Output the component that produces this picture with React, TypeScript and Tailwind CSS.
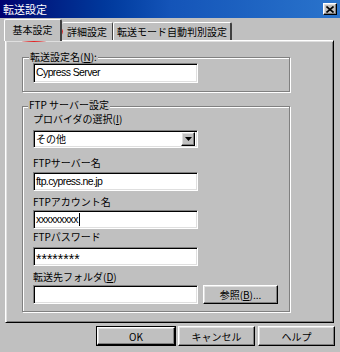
import React from "react";

const sunken =
  "border border-t-[#808080] border-l-[#808080] border-r-white border-b-white shadow-[inset_1px_1px_0_#000,inset_-1px_-1px_0_#dfdfdf] bg-white";
const raised =
  "border border-t-white border-l-white border-r-black border-b-black shadow-[inset_-1px_-1px_0_#808080,inset_1px_1px_0_#dfdfdf] bg-[#c0c0c0]";
const etched = "border border-[#808080] shadow-[1px_1px_0_#fff,inset_1px_1px_0_#fff]";
const latin = "font-['Liberation_Sans',Arial,sans-serif] text-[10.5px] tracking-[-0.6px]";

const Label = ({ children, className = "" }: { children: React.ReactNode; className?: string }) => (
  <div className={`leading-[12px] h-[12px] whitespace-nowrap ${className}`}>{children}</div>
);

const TextBox = ({
  value,
  caret,
  password,
  className = "",
}: {
  value?: string;
  caret?: boolean;
  password?: boolean;
  className?: string;
}) => (
  <div className={`${sunken} w-[165px] h-[19px] flex items-center pl-[2px] ${className}`}>
    <span
      className={
        password
          ? "font-['Liberation_Sans',Arial,sans-serif] text-[14px] leading-none pt-[4px]"
          : latin
      }
    >
      {value}
    </span>
    {caret && <span className="ml-[1px] w-px h-[13px] bg-black" />}
  </div>
);

export default function App() {
  return (
    <div className="relative w-[340px] h-[352px] overflow-hidden bg-[#c0c0c0] text-black text-[10px] font-['Noto_Sans_CJK_JP',sans-serif]">
      {/* title bar */}
      <div className="h-[18px] flex items-center justify-between pl-[3px] pr-[3px] bg-linear-to-r from-[#000070] via-[#1454b8] to-[#2a74cc]">
        <span className="text-white text-[11px] leading-none">転送設定</span>
        <div className={`${raised} w-[14px] h-[12px] flex items-center justify-center`}>
          <svg width="8" height="7" viewBox="0 0 8 7">
            <path d="M0.5 0.5 L7.5 6.5 M7.5 0.5 L0.5 6.5" stroke="#000" strokeWidth="1.6" />
          </svg>
        </div>
      </div>

      {/* tabs */}
      <div className="relative z-10 -mb-px flex items-end h-[23px] pl-[4px]">
        <div className="h-[22px] w-[58px] bg-[#c0c0c0] border-l border-t border-white border-r-2 border-r-[#404040] rounded-t-[2px] flex items-center justify-center pb-[2px]">
          基本設定
        </div>
        <div className="mb-px h-[18px] w-[51px] border-t border-white border-r border-r-[#404040] rounded-t-[2px] flex items-center justify-center">
          詳細設定
        </div>
        <div className="mb-px h-[18px] w-[119px] border-l border-t border-white border-r-2 border-r-[#404040] rounded-t-[2px] flex items-center justify-center">
          転送モード自動判別設定
        </div>
      </div>

      {/* tab panel */}
      <div className="ml-[5px] w-[329px] h-[283px] border-l border-t border-white border-r border-b border-r-black border-b-black shadow-[inset_1px_1px_0_#dfdfdf,inset_-1px_-1px_0_#808080] pt-[16px] pl-[16px]">
        <div className={`${etched} w-[268px] pl-[10px] pb-[8px]`}>
          <Label className="-mt-[7px] -ml-[4px] w-fit px-[1px] bg-[#c0c0c0]">
            転送設定名(<span className="underline">N</span>):
          </Label>
          <TextBox value="Cypress Server" className="h-[20px]" />
        </div>

        <div className={`${etched} mt-[14px] w-[268px] pl-[10px] pb-[7px]`}>
          <Label className="-mt-[8px] -ml-[5px] w-fit px-[1px] bg-[#c0c0c0]">FTP サーバー設定</Label>
          <Label className="mt-[2px]">
            プロバイダの選択(<span className="underline">I</span>)
          </Label>
          <div className={`${sunken} mt-[5px] w-[165px] h-[18px] flex items-center justify-between pl-[2px] pr-[2px]`}>
            <span className="leading-none">その他</span>
            <div className={`${raised} w-[14px] h-[14px] flex items-center justify-center`}>
              <svg width="7" height="4" viewBox="0 0 7 4">
                <path d="M0 0 H7 L3.5 4 Z" fill="#000" />
              </svg>
            </div>
          </div>

          <Label className="mt-[9px]">FTPサーバー名</Label>
          <TextBox value="ftp.cypress.ne.jp" className="mt-[3px]" />

          <Label className="mt-[5px]">FTPアカウント名</Label>
          <TextBox value="xxxxxxxxx" caret className="mt-[2px]" />

          <Label className="mt-[2px]">FTPパスワード</Label>
          <TextBox value="********" password className="mt-[4px]" />

          <Label className="mt-[5px]">
            転送先フォルダ(<span className="underline">D</span>)
          </Label>
          <div className="mt-[2px] flex items-center gap-[5px]">
            <TextBox />
            <div className={`${raised} w-[75px] h-[19px] flex items-center justify-center`}>
              参照(<span className="underline">B</span>)...
            </div>
          </div>
        </div>
      </div>

      {/* dialog buttons */}
      <div className="mt-[3px] pl-[96px] flex items-center">
        <div className="w-[80px] h-[20px] border border-black">
          <div className={`${raised} w-full h-full flex items-center justify-center`}>OK</div>
        </div>
        <div className={`${raised} ml-[2px] w-[77px] h-[20px] flex items-center justify-center`}>キャンセル</div>
        <div className={`${raised} ml-[3px] w-[77px] h-[20px] flex items-center justify-center`}>ヘルプ</div>
      </div>

      {/* red annotation circle */}
      <div className="absolute left-[5px] top-[21px] w-[58px] h-[21px] rounded-[50%] border-[1.5px] border-[#e02828]" />
    </div>
  );
}
